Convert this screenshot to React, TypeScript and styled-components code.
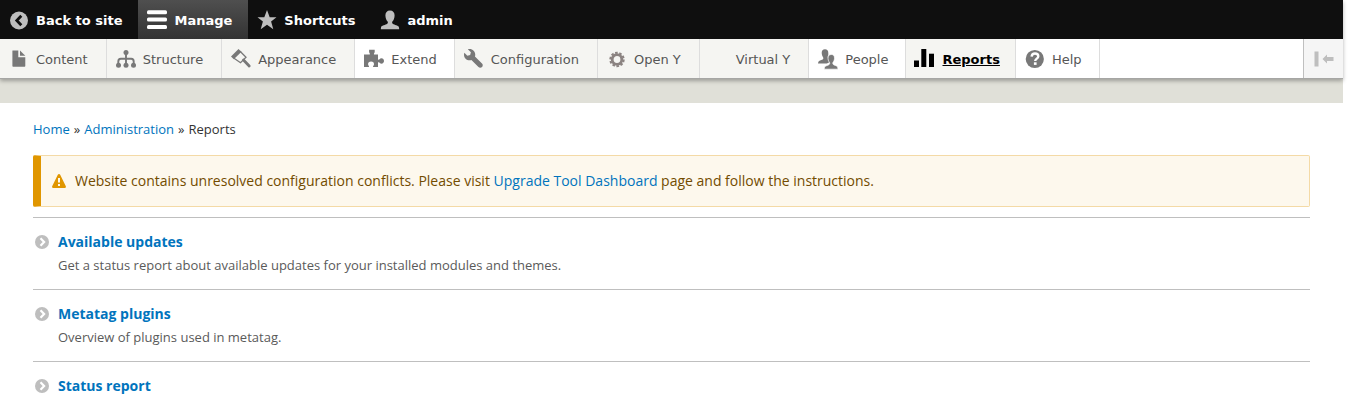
import React from 'react';
import styled, { createGlobalStyle, css } from 'styled-components';

const GlobalStyle = createGlobalStyle`
  * { box-sizing: border-box; }
  body {
    margin: 0;
    padding-right: 17px;
    background: #fff;
    color: #333;
    font-family: 'Open Sans', 'Noto Sans', sans-serif;
    font-size: 14px;
    line-height: 20px;
  }
`;

const Toolbar = styled.header`
  font-family: 'DejaVu Sans', Verdana, sans-serif;
  font-size: 13px;
  line-height: 19px;
  position: relative;
  box-shadow: 0 2px 4px rgba(0, 0, 0, 0.3);
`;

const ToolbarBar = styled.nav`
  display: flex;
  height: 39px;
  background: #0f0f0f;
`;

const BarLink = styled.a<{ $active?: boolean }>`
  display: flex;
  align-items: center;
  gap: 7px;
  padding: 0 16px 0 9px;
  color: ${(p) => (p.$active ? '#fff' : '#bebebe')};
  font-weight: 700;
  text-decoration: none;
  ${(p) => p.$active && css`background: linear-gradient(#4f4f4f, #333);`}
`;

const BarText = styled.span`
  color: #fff;
  line-height: 21px;
  padding-top: 2px;
`;

const Tray = styled.nav`
  display: flex;
  height: 40px;
  background: #fff;
  border-bottom: 1px solid #a6a6a4;
`;

const TrayLink = styled.a<{ $shaded?: boolean; $active?: boolean }>`
  display: flex;
  align-items: center;
  gap: 7px;
  padding: 0 ${(p) => (p.$active ? 15 : p.$shaded ? 18 : 17)}px 0 9px;
  border-right: 1px solid #ddd;
  background: ${(p) => (p.$shaded ? '#f5f5f2' : '#fff')};
  color: ${(p) => (p.$active ? '#000' : '#565656')};
  font-weight: ${(p) => (p.$active ? 700 : 400)};
  text-decoration: ${(p) => (p.$active ? 'underline' : 'none')};
`;

const TrayText = styled.span`
  line-height: 21px;
  padding-top: 2px;
`;

const TrayToggle = styled.button`
  display: flex;
  align-items: center;
  justify-content: center;
  width: 40px;
  margin-left: auto;
  padding: 0;
  border: 0;
  border-left: 1px solid #bfbfbf;
  background: #f5f5f5;
`;

const IconBox = styled.span<{ $active?: boolean; $plain?: boolean }>`
  width: 20px;
  height: 20px;
  flex: none;
  color: ${(p) => (p.$plain ? 'inherit' : p.$active ? '#000' : '#787878')};

  svg {
    display: block;
    overflow: visible;
  }
`;

const HeaderBand = styled.div`
  height: 24px;
  background: #e0e0d8;
`;

const Page = styled.div`
  padding: 16px 33px 0;
`;

const Breadcrumb = styled.nav`
  font-size: 13px;

  ol {
    display: flex;
    gap: 4px;
    margin: 0;
    padding: 0;
    list-style: none;
  }

  li + li::before {
    content: '»';
    margin-right: 4px;
  }
`;

const Link = styled.a`
  color: #0074bd;
  text-decoration: none;
`;

const Warning = styled.div`
  display: flex;
  align-items: center;
  gap: 8px;
  min-height: 52px;
  margin: 16px 0 10px;
  padding: 0 10px;
  border: 1px solid #f4daa6;
  border-left: 8px solid #e09600;
  border-radius: 2px;
  background: #fdf8ed;
  color: #734c00;

  svg { flex: none; }
  p { margin: 0; }
`;

const ReportList = styled.dl`
  margin: 0;
`;

const Report = styled.div`
  display: grid;
  grid-template-columns: 16px 1fr;
  column-gap: 8px;
  padding: 14px 0 14px 1px;
  border-top: 1px solid #bfbfbf;

  &:last-child { padding-bottom: 0; }
  svg { margin-top: 1px; }
`;

const ReportTitle = styled.dt`
  font-size: 14px;
  font-weight: 700;
`;

const ReportText = styled.dd`
  grid-column: 2;
  margin: 3px 0 0;
  color: #5a5a5a;
  font-size: 13px;
`;

const Glyph = ({ children, size = 20 }: { children: React.ReactNode; size?: number }) => (
  <svg width={size} height={size} viewBox="0 0 20 20" fill="currentColor" aria-hidden="true">
    {children}
  </svg>
);

const icons = {
  back: (
    <>
      <circle cx="10" cy="10.5" r="9" />
      <path d="M12.3 5.8 7.8 10.5l4.5 4.7" fill="none" stroke="#0f0f0f" strokeWidth="2.8" />
    </>
  ),
  menu: (
    <>
      <rect y="0.3" width="20" height="4" rx="1.5" />
      <rect y="7.6" width="20" height="4" rx="1.5" />
      <rect y="15" width="20" height="4" rx="1.5" />
    </>
  ),
  star: <path d="M10 0l2.7 7.2h6.8l-5.4 4.4 2.2 7.7L10 14.7l-6.3 4.6 2.2-7.7L.5 7.2h6.8z" />,
  user: (
    <path d="M10 .4c-3 0-4.7 2-4.6 5.1.1 2.7 1.1 5.1 2.4 6.3.3 1.2-.2 2-1.3 2.5-2.3 1-5.3 1.4-5.5 3.2L.8 19.3h18.4l-.2-1.8c-.2-1.8-3.2-2.2-5.500-3.200-1.100-.5-1.600-1.300-1.300-2.500 1.300-1.200 2.300-3.600 2.400-6.300C14.700 2.400 13 .4 10 .4z" />
  ),
  file: (
    <>
      <path d="M3.500 1.500h5.800v6.800h7v8.700c0 .4-.3.700-.7.700H4.100a.7.7 0 0 1-.7-.7V2z" />
      <path d="M11 1.500l5.300 5.300H11z" />
    </>
  ),
  structure: (
    <>
      <path d="M10 4v11M2.300 15v-2.500c0-1.800.8-2.700 2.500-2.700h10.400c1.700 0 2.500.9 2.500 2.700V15" fill="none" stroke="currentColor" strokeWidth="1.9" />
      <circle cx="10" cy="3.4" r="2.5" />
      <circle cx="2.5" cy="16.3" r="2.5" />
      <circle cx="10" cy="16.3" r="2.5" />
      <circle cx="17.5" cy="16.3" r="2.5" />
    </>
  ),
  appearance: (
    <>
      <path d="M0 7.500L7.500 0l3 2.700-7.700 7.600z" />
      <path d="M9.300 2.500l5.700 5.700-5.500 5.500L3 9.200" fill="none" stroke="currentColor" strokeWidth="1.3" />
      <path d="M12.500 11l5.700 6" fill="none" stroke="currentColor" strokeWidth="2.8" strokeLinecap="round" />
    </>
  ),
  extend: (
    <path d="M0 5.500h5.800c.4-.9-.5-1.500-.7-2.500V.7h5.600v2.200c-.2 1-1.100 1.700-.7 2.600h4v5c.9.6 1.700-.4 2.400-1 2.200-.6 3.600.8 3.600 2.500s-1.400 3.100-3.600 2.500c-.7-.6-1.500-1.600-2.400-1v4.600H9.200c-.7-.6.6-1.500.8-2.600.2-1.900-1-3.100-2.900-3.100s-3.200 1.200-3 3.100c.2 1.100 1.400 2 .8 2.600H0z" />
  ),
  wrench: (
    <g transform="scale(1.25)">
      <path d="M14.416 11.586l-.01-.008v-.001l-5.656-5.656c.15-.449.252-.921.252-1.421 0-2.485-2.016-4.500-4.502-4.500-.505 0-.981.102-1.434.255l2.431 2.431-.588 2.196-2.196.588-2.445-2.445c-.162.464-.268.956-.268 1.475 0 2.486 2.014 4.500 4.500 4.500.5 0 .972-.102 1.421-.251l5.667 5.665c.781.781 2.047.781 2.828 0s.781-2.047 0-2.828z" />
    </g>
  ),
  gear: (
    <g fill="none" stroke="#8b8381">
      <circle cx="10" cy="10.5" r="4.8" strokeWidth="2.8" />
      <circle cx="10" cy="10.5" r="6.7" strokeWidth="2" strokeDasharray="2.6 1.61" />
    </g>
  ),
  people: (
    <>
      <path d="M7 .3C4.800.3 3.600 1.700 3.700 4c.1 1.900.7 3.500 1.500 4.400.4 1.200-.1 2-1.200 2.400C2.400 11.500.3 12 .2 13.400L0 14.600h8.700c.9-.7 2.300-1 3-1.600-1.100-1-1.800-2.900-1.900-4.900 0-.9.100-1.700.5-2.400V4C10.300 1.600 9.200.3 7 .3z" />
      <path d="M13.300 5.500c-2.200 0-3.400 1.400-3.300 3.800.1 1.800.8 3.400 1.600 4.300.3 1.100-.1 1.900-1.200 2.400-1.700.7-3.900 1.100-4 2.700l-.2 1.500H20l-.2-1.500c-.1-1.600-2-2-3.700-2.700-1.100-.5-1.500-1.300-1.200-2.400.8-.9 1.500-2.500 1.600-4.300.1-2.400-1-3.800-3.200-3.800z" stroke="#fff" strokeWidth=".7" />
    </>
  ),
  reports: (
    <>
      <rect x="-1" y="11.5" width="5" height="6.5" />
      <rect x="6.3" y="0" width="5" height="18" />
      <rect x="14" y="4.7" width="5" height="13.3" />
    </>
  ),
  help: (
    <>
      <circle cx="9.8" cy="10" r="9.1" />
      <path d="M6.600 7.700c.2-2.200 1.600-3.200 3.400-3.200 2 0 3.300 1 3.300 2.700 0 2.400-3.100 2.400-3.100 4.900" fill="none" stroke="#fff" strokeWidth="2.4" />
      <rect x="8.900" y="13.3" width="2.7" height="2.6" fill="#fff" />
    </>
  ),
};

type IconName = keyof typeof icons;

const barItems: { label: string; icon: IconName; active?: boolean }[] = [
  { label: 'Back to site', icon: 'back' },
  { label: 'Manage', icon: 'menu', active: true },
  { label: 'Shortcuts', icon: 'star' },
  { label: 'admin', icon: 'user' },
];

const trayItems: { label: string; icon?: IconName; shaded?: boolean; active?: boolean }[] = [
  { label: 'Content', icon: 'file', shaded: true },
  { label: 'Structure', icon: 'structure', shaded: true },
  { label: 'Appearance', icon: 'appearance', shaded: true },
  { label: 'Extend', icon: 'extend' },
  { label: 'Configuration', icon: 'wrench', shaded: true },
  { label: 'Open Y', icon: 'gear', shaded: true },
  { label: 'Virtual Y', shaded: true },
  { label: 'People', icon: 'people' },
  { label: 'Reports', icon: 'reports', shaded: true, active: true },
  { label: 'Help', icon: 'help' },
];

const reports = [
  { title: 'Available updates', text: 'Get a status report about available updates for your installed modules and themes.' },
  { title: 'Metatag plugins', text: 'Overview of plugins used in metatag.' },
  { title: 'Status report', text: '' },
];

export default function App() {
  return (
    <>
      <GlobalStyle />
      <Toolbar>
        <ToolbarBar aria-label="Toolbar">
          {barItems.map((item) => (
            <BarLink key={item.label} href="#" $active={item.active}>
              <IconBox $plain><Glyph>{icons[item.icon]}</Glyph></IconBox>
              <BarText>{item.label}</BarText>
            </BarLink>
          ))}
        </ToolbarBar>
        <Tray aria-label="Administration menu">
          {trayItems.map((item) => (
            <TrayLink key={item.label} href="#" $shaded={item.shaded} $active={item.active}>
              <IconBox $active={item.active}>{item.icon && <Glyph>{icons[item.icon]}</Glyph>}</IconBox>
              <TrayText>{item.label}</TrayText>
            </TrayLink>
          ))}
          <TrayToggle type="button" aria-label="Vertical orientation">
            <svg width="20" height="16" viewBox="0 0 20 16" fill="#bebebe" aria-hidden="true">
              <rect x="0.5" y="0.5" width="4" height="15" />
              <path d="M8.500 8l4.500-4.500V6h6.500v4H13v2.500z" />
            </svg>
          </TrayToggle>
        </Tray>
      </Toolbar>
      <HeaderBand />
      <Page>
        <Breadcrumb aria-label="Breadcrumb">
          <ol>
            <li><Link href="#">Home</Link></li>
            <li><Link href="#">Administration</Link></li>
            <li>Reports</li>
          </ol>
        </Breadcrumb>
        <Warning role="status">
          <svg width="16" height="16" viewBox="0 0 16 16" aria-hidden="true">
            <path d="M8 1c-.5 0-.9.3-1.200.8L1.300 13c-.6 1.200-.1 2 1 2h11.400c1.100 0 1.600-.8 1-2L9.200 1.800C8.900 1.300 8.500 1 8 1z" fill="#e09600" />
            <path d="M7 5h2v4.500H7zM7 11h2v2H7z" fill="#fdf8ed" />
          </svg>
          <p>
            Website contains unresolved configuration conflicts. Please visit{' '}
            <Link href="#">Upgrade Tool Dashboard</Link> page and follow the instructions.
          </p>
        </Warning>
        <ReportList>
          {reports.map((report) => (
            <Report key={report.title}>
              <svg width="16" height="16" viewBox="0 0 16 16" aria-hidden="true">
                <circle cx="8" cy="9" r="7" fill="#bebebe" />
                <path d="M6.500 5.300L10.100 9l-3.600 3.700" fill="none" stroke="#fff" strokeWidth="2.2" />
              </svg>
              <ReportTitle><Link href="#">{report.title}</Link></ReportTitle>
              {report.text && <ReportText>{report.text}</ReportText>}
            </Report>
          ))}
        </ReportList>
      </Page>
    </>
  );
}
